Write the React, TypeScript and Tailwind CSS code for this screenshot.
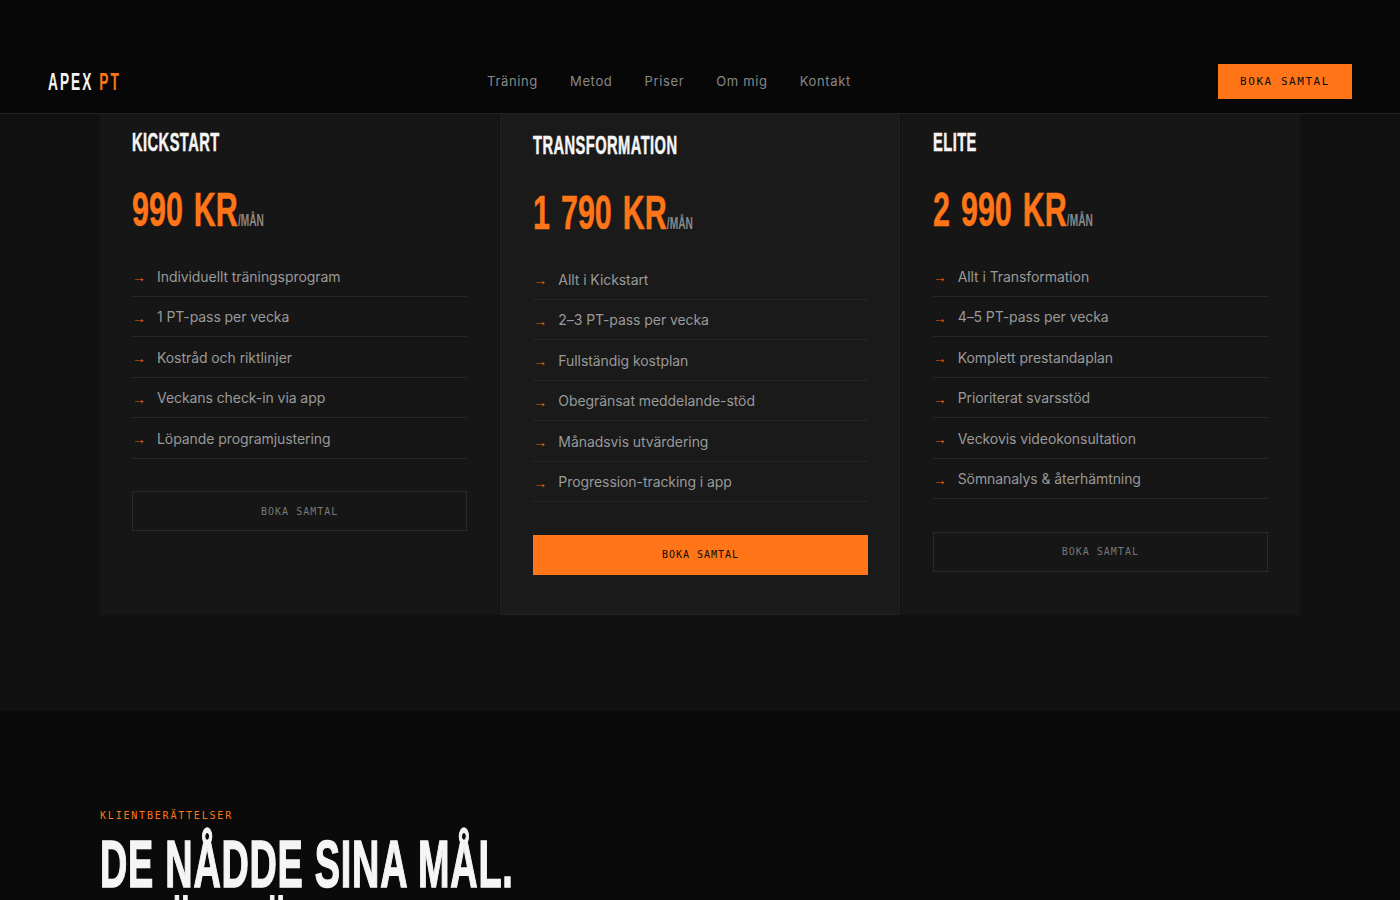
import React from 'react';

// no condensed family is installed, so the display text is squeezed horizontally
const display = "font-['Liberation_Sans','Arial',sans-serif] font-bold whitespace-nowrap origin-left";
const body = "font-['Inter','Noto_Sans',sans-serif]";
const mono = "font-['DejaVu_Sans_Mono','Liberation_Mono',monospace]";

const plans = [
  {
    name: 'KICKSTART',
    price: '990 KR',
    features: ['Individuellt träningsprogram', '1 PT-pass per vecka', 'Kostråd och riktlinjer', 'Veckans check-in via app', 'Löpande programjustering'],
  },
  {
    name: 'TRANSFORMATION',
    price: '1 790 KR',
    featured: true,
    features: ['Allt i Kickstart', '2–3 PT-pass per vecka', 'Fullständig kostplan', 'Obegränsat meddelande-stöd', 'Månadsvis utvärdering', 'Progression-tracking i app'],
  },
  {
    name: 'ELITE',
    price: '2 990 KR',
    features: ['Allt i Transformation', '4–5 PT-pass per vecka', 'Komplett prestandaplan', 'Prioriterat svarsstöd', 'Veckovis videokonsultation', 'Sömnanalys & återhämtning'],
  },
];

const links = ['Träning', 'Metod', 'Priser', 'Om mig', 'Kontakt'];

function PlanCard({ plan }: { plan: (typeof plans)[number] }) {
  return (
    <div className={plan.featured ? 'border-x border-b border-[#222222] bg-[#1a1a1a] pt-[19px] pr-[31px] pb-[39px] pl-8' : 'bg-[#161616] px-8 pt-4 pb-10'}>
      <h3 className={`${display} scale-x-[0.587] text-[25px] leading-6 tracking-[0.03em] text-[#f5f5f5] [-webkit-text-stroke:0.5px_#f5f5f5]`}>{plan.name}</h3>
      <div className={`${display} mt-[30px] flex scale-x-[0.635] items-baseline`}>
        <span className="text-[48px] leading-[52px] text-[#ff7518] [word-spacing:4px] [-webkit-text-stroke:0.5px_#ff7518]">{plan.price}</span>
        <span className="text-base text-[#888888]">/MÅN</span>
      </div>
      <ul className="mt-[20.4px]">
        {plan.features.map((f) => (
          <li key={f} className={`${body} flex h-[40.5px] items-center gap-3 border-b border-[#262626] text-[14px] tracking-[-0.005em] text-[#999999]`}>
            <span className="w-[13px] pt-[2px] font-['Liberation_Sans',sans-serif] text-sm text-[#e8650f]">→</span>
            <span>{f}</span>
          </li>
        ))}
      </ul>
      <button
        className={`${mono} mt-[32.2px] block h-10 w-full text-[10px] tracking-[0.1em] ${
          plan.featured ? 'bg-[#ff7518] text-[#0a0a0a]' : 'border border-[#2a2a2a] text-[#777777]'
        }`}
      >
        BOKA SAMTAL
      </button>
    </div>
  );
}

export default function App() {
  return (
    <div className="h-[900px] overflow-hidden bg-[#0a0a0a]">
      <nav className="flex h-[114px] items-center justify-between border-b border-[#222222] bg-[#070707] px-12 pt-[50px]">
        <div className="w-[72px]">
          <div className={`${display} scale-x-[0.57] text-2xl tracking-[0.15em] text-[#f5f5f5]`}>
            APEX <span className="text-[#ff7518]">PT</span>
          </div>
        </div>
        <div className={`${body} flex gap-8 text-[13px] tracking-[0.05em] text-[#888888]`}>
          {links.map((l) => (
            <a key={l}>{l}</a>
          ))}
        </div>
        <button className={`${mono} h-[35px] w-[134px] bg-[#ff7518] pt-px text-[11px] tracking-[0.14em] text-[#0a0a0a]`}>BOKA SAMTAL</button>
      </nav>

      {/* Priser */}
      <section className="bg-[#111111] px-[100px] pb-24">
        <div className="grid grid-cols-3 gap-px">
          {plans.map((p) => (
            <PlanCard key={p.name} plan={p} />
          ))}
        </div>
      </section>

      {/* Klientberättelser */}
      <section className="bg-[#0a0a0a] px-[100px] pt-[97px]">
        <p className={`${mono} text-[10px] tracking-[0.18em] text-[#ff7518]`}>KLIENTBERÄTTELSER</p>
        <h2 className={`${display} mt-[8.5px] scale-x-[0.573] text-[66px] leading-[66px] tracking-[0.02em] text-[#f5f5f5] [-webkit-text-stroke:1.5px_#f5f5f5]`}>
          DE NÅDDE SINA MÅL.
          <br />
          DU ÄR NÄST.
        </h2>
      </section>
    </div>
  );
}
